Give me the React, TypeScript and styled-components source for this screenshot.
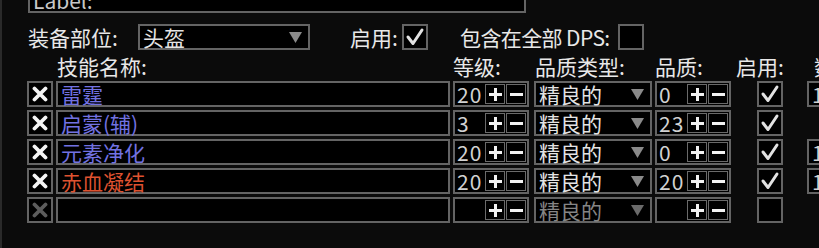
import React from "react";
import styled, { createGlobalStyle } from "styled-components";

const GlobalStyle = createGlobalStyle`
  html, body {
    margin: 0;
    padding: 0;
    background: #0b0b0b;
  }
  body {
    font-family: "Noto Sans CJK SC", "Noto Sans", sans-serif;
    overflow: hidden;
  }
`;

const Panel = styled.div`
  width: 819px;
  height: 248px;
  box-sizing: border-box;
  overflow: hidden;
  padding-left: 27px;
  background: #0b0b0b;
  box-shadow: inset 2px 0 0 #2a2a2a;
  color: #e4e4e4;
  font-size: 21px;
  display: flex;
  flex-direction: column;
`;

const Box = styled.div<{ $w: number; $ml?: number }>`
  width: ${(p) => p.$w}px;
  margin-left: ${(p) => p.$ml ?? 0}px;
  height: 26px;
  flex: none;
  box-sizing: border-box;
  border: 2px solid #646464;
  background: #000;
`;

const TextBox = styled(Box)<{ $color?: string }>`
  padding-left: 3px;
  line-height: 22px;
  color: ${(p) => p.$color ?? "#e4e4e4"};
  white-space: nowrap;
`;

const LabelBox = styled(TextBox)`
  margin-top: -13px;
  color: #c8c8c8;
`;

const Line = styled.div<{ $mt: number }>`
  display: flex;
  align-items: center;
  height: 26px;
  margin-top: ${(p) => p.$mt}px;
  white-space: nowrap;
`;

const FieldLabel = styled.div<{ $w: number; $ml?: number; $tight?: boolean }>`
  width: ${(p) => p.$w}px;
  margin-left: ${(p) => p.$ml ?? 0}px;
  flex: none;
  line-height: 24px;
  color: #e8e8e8;
  letter-spacing: ${(p) => (p.$tight ? "-0.6px" : "0")};
`;

const Rows = styled.div`
  display: flex;
  flex-direction: column;
  gap: 3px;
  margin-top: 2px;
`;

const DropBox = styled(Box)<{ $color?: string }>`
  display: flex;
  align-items: center;
  justify-content: space-between;
  padding: 0 6px 0 3px;
  color: ${(p) => p.$color ?? "#e4e4e4"};
  line-height: 22px;
`;

const SpinBox = styled(Box)`
  display: flex;
  align-items: center;
  padding: 0 1px;
  gap: 1px;
  line-height: 22px;
`;

const SpinValue = styled.span`
  flex: 1;
  padding-left: 1px;
  color: #d2d2d2;
  letter-spacing: 1px;
`;

const StepButton = styled.div`
  width: 20px;
  height: 20px;
  box-sizing: border-box;
  border: 1.5px solid #6a6a6a;
  display: flex;
  align-items: center;
  justify-content: center;
`;

const IconBox = styled(Box)`
  display: flex;
  align-items: center;
  justify-content: center;
`;

const Arrow = ({ color = "#8a8a8a" }: { color?: string }) => (
  <svg width="13" height="11" viewBox="0 0 13 11">
    <polygon points="0,0 13,0 6.5,11" fill={color} />
  </svg>
);

const Check = () => (
  <svg width="20" height="20" viewBox="0 0 20 20">
    <polyline points="3,10 8,16.5 17,3" fill="none" stroke="#e2e2e2" strokeWidth="3" strokeLinecap="round" strokeLinejoin="round" />
  </svg>
);

const Cross = ({ color }: { color: string }) => (
  <svg width="16" height="16" viewBox="0 0 16 16">
    <path d="M2.5 2.5 L13.5 13.5 M13.5 2.5 L2.5 13.5" stroke={color} strokeWidth="3.8" strokeLinecap="round" />
  </svg>
);

const Plus = () => (
  <svg width="13" height="13" viewBox="0 0 13 13">
    <rect x="0" y="5" width="13" height="3" fill="#f2f2f2" />
    <rect x="5" y="0" width="3" height="13" fill="#f2f2f2" />
  </svg>
);

const Minus = () => (
  <svg width="13" height="13" viewBox="0 0 13 13">
    <rect x="0" y="5" width="13" height="3" fill="#f2f2f2" />
  </svg>
);

const CheckBox = ({ checked, ml }: { checked: boolean; ml?: number }) => (
  <IconBox $w={26} $ml={ml}>{checked && <Check />}</IconBox>
);

const Spinner = ({ value, ml }: { value: string; ml: number }) => (
  <SpinBox $w={76} $ml={ml}>
    <SpinValue>{value}</SpinValue>
    <StepButton><Plus /></StepButton>
    <StepButton><Minus /></StepButton>
  </SpinBox>
);

type Gem = {
  name: string;
  color: string;
  level: string;
  quality: string;
  enabled: boolean;
  count?: string;
  empty?: boolean;
};

const gems: Gem[] = [
  { name: "雷霆", color: "#7272e2", level: "20", quality: "0", enabled: true, count: "1" },
  { name: "启蒙(辅)", color: "#7272e2", level: "3", quality: "23", enabled: true },
  { name: "元素净化", color: "#7272e2", level: "20", quality: "0", enabled: true, count: "1" },
  { name: "赤血凝结", color: "#de5230", level: "20", quality: "20", enabled: true, count: "1" },
  { name: "", color: "#e4e4e4", level: "", quality: "", enabled: false, empty: true },
];

export default function App() {
  return (
    <>
      <GlobalStyle />
      <Panel>
        <LabelBox $w={498} $ml={1}>Label:</LabelBox>

        <Line $mt={11}>
          <FieldLabel $w={110} $ml={1}>装备部位:</FieldLabel>
          <DropBox $w={172}>
            <span>头盔</span>
            <Arrow />
          </DropBox>
          <FieldLabel $w={52} $ml={40}>启用:</FieldLabel>
          <CheckBox checked />
          <FieldLabel $w={158} $ml={32} $tight>包含在全部 DPS:</FieldLabel>
          <CheckBox checked={false} />
        </Line>

        <Line $mt={3}>
          <FieldLabel $w={394} $ml={30}>技能名称:</FieldLabel>
          <FieldLabel $w={76} $ml={2}>等级:</FieldLabel>
          <FieldLabel $w={118} $ml={6}>品质类型:</FieldLabel>
          <FieldLabel $w={76} $ml={2}>品质:</FieldLabel>
          <FieldLabel $w={70} $ml={5}>启用:</FieldLabel>
          <FieldLabel $w={40} $ml={8}>数量:</FieldLabel>
        </Line>

        <Rows>
          {gems.map((g, i) => (
            <Line key={i} $mt={0}>
              <IconBox $w={26}>
                <Cross color={g.empty ? "#5c5c5c" : "#f4f4f4"} />
              </IconBox>
              <TextBox $w={394} $ml={3} $color={g.color}>{g.name}</TextBox>
              <Spinner value={g.level} ml={3} />
              <DropBox $w={118} $ml={5} $color={g.empty ? "#858585" : "#e4e4e4"}>
                <span>精良的</span>
                <Arrow color={g.empty ? "#6a6a6a" : "#8a8a8a"} />
              </DropBox>
              <Spinner value={g.quality} ml={3} />
              <CheckBox checked={g.enabled} ml={26} />
              {g.count && <TextBox $w={40} $ml={24} $color="#d2d2d2">{g.count}</TextBox>}
            </Line>
          ))}
        </Rows>
      </Panel>
    </>
  );
}
